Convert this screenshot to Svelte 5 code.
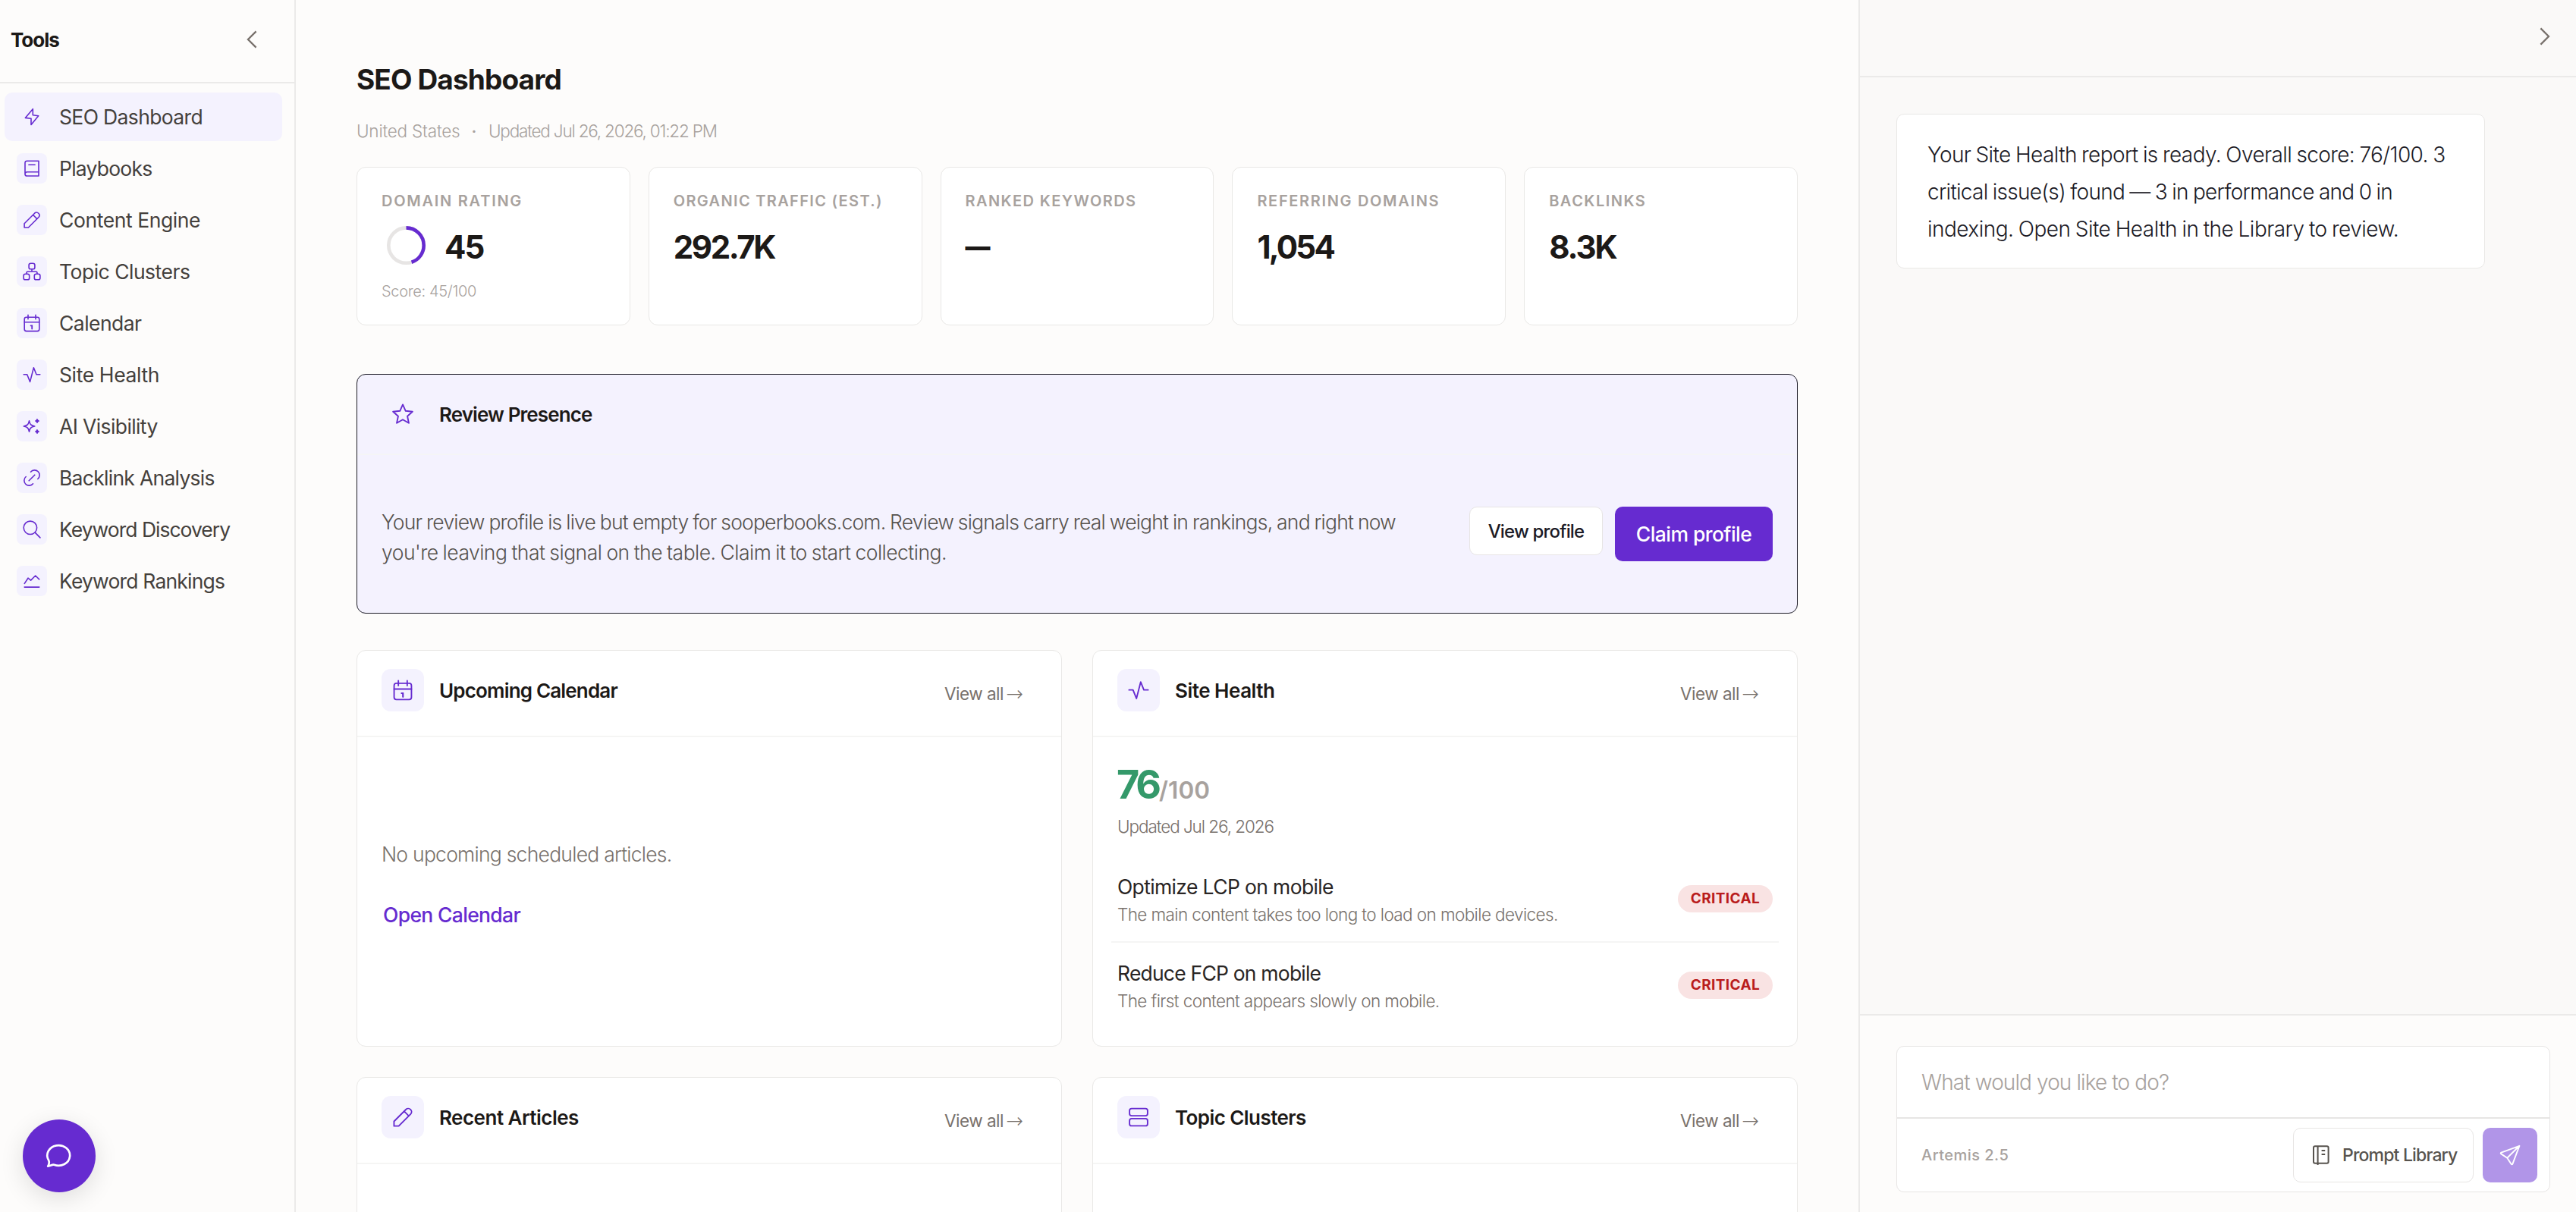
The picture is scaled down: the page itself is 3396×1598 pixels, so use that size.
<script>
  const tools = [
    { label: 'SEO Dashboard', icon: 'bolt', track: -0.64 },
    { label: 'Playbooks', icon: 'book', track: -0.78 },
    { label: 'Content Engine', icon: 'pencil', track: -0.42 },
    { label: 'Topic Clusters', icon: 'tree', track: -0.5 },
    { label: 'Calendar', icon: 'calendar', track: -0.55 },
    { label: 'Site Health', icon: 'pulse', track: -0.38 },
    { label: 'AI Visibility', icon: 'sparkles', track: -0.6 },
    { label: 'Backlink Analysis', icon: 'link', track: -0.72 },
    { label: 'Keyword Discovery', icon: 'search', track: -1 },
    { label: 'Keyword Rankings', icon: 'chart', track: -0.82 }
  ];
  const stats = [
    { label: 'DOMAIN RATING', value: '45', track: 1.75, vtrack: -1.9, score: 45 },
    { label: 'ORGANIC TRAFFIC (EST.)', value: '292.7K', track: 1.33, vtrack: -2.41 },
    { label: 'RANKED KEYWORDS', value: '—', track: 1.4, vtrack: 0, empty: true },
    { label: 'REFERRING DOMAINS', value: '1,054', track: 1.67, vtrack: -2.77 },
    { label: 'BACKLINKS', value: '8.3K', track: 1.5, vtrack: -2.1 }
  ];
  const issues = [
    { title: 'Optimize LCP on mobile', track: -0.64, desc: 'The main content takes too long to load on mobile devices.', level: 'CRITICAL' },
    { title: 'Reduce FCP on mobile', track: -0.79, desc: 'The first content appears slowly on mobile.', level: 'CRITICAL' }
  ];
  const message = [
    { text: 'Your Site Health report is ready. Overall score: 76/100. 3', track: -0.61 },
    { text: 'critical issue(s) found — 3 in performance and 0 in', track: -0.72 },
    { text: 'indexing. Open Site Health in the Library to review.', track: -0.53 }
  ];
</script>

{#snippet icon(name)}
  <svg class="icon" viewBox="0 0 24 24" fill="none" stroke="currentColor" stroke-width="1.6" stroke-linejoin="round" stroke-linecap="round">
    {#if name === 'bolt'}
      <path d="M13.3 1.7V9.8L20.7 10.7 11 22.4V14.3L3.3 13.4Z" />
    {:else if name === 'book'}
      <path d="M21 2.2V22H5.6A2.6 2.6 0 0 1 3 19.4V4.8A2.6 2.6 0 0 1 5.6 2.2ZM3 19.4A2.6 2.6 0 0 1 5.6 16.8H21M7.9 7.3h8.2" />
    {:else if name === 'pencil'}
      <path d="M2.1 22v-5.3L15.6 3.2a3.75 3.75 0 0 1 5.3 5.3L7.4 22ZM13.5 5.3l5.3 5.3" />
    {:else if name === 'tree'}
      <rect x="8.1" y="1.2" width="7.8" height="7.6" rx="2.4" />
      <rect x="1.1" y="15.2" width="7.6" height="7.6" rx="2.4" />
      <rect x="15.3" y="15.2" width="7.6" height="7.6" rx="2.4" />
      <path d="M12 8.8V12M5 15.2V14a2 2 0 0 1 2-2h10a2 2 0 0 1 2 2v1.2" />
    {:else if name === 'calendar'}
      <rect x="2.2" y="4.2" width="19.6" height="18.4" rx="2.6" />
      <path d="M2.2 10.7h19.6M7 1.2v5.6M17 1.2v5.6" />
      <path d="M10.6 15.4h1.6v4.2" stroke-width="1.8" stroke-linejoin="miter" />
    {:else if name === 'pulse'}
      <path d="M1.2 11.7h4.5L9.6 21.4 14.4 2.7 18 11.7h4.8" />
    {:else if name === 'sparkles'}
      <path d="M8.5 4.8C9.4 9.6 10.9 11.1 15.7 12 10.9 12.9 9.4 14.4 8.5 19.2 7.6 14.4 6.1 12.9 1.3 12 6.1 11.1 7.6 9.6 8.5 4.8Z" />
      <path d="M19 3C19.4 4.3 19.7 4.6 21 5 19.7 5.4 19.4 5.7 19 7 18.6 5.7 18.3 5.4 17 5 18.3 4.6 18.6 4.3 19 3ZM19 17C19.4 18.3 19.7 18.6 21 19 19.7 19.4 19.4 19.7 19 21 18.6 19.7 18.3 19.4 17 19 18.3 18.6 18.6 18.3 19 17Z" fill="currentColor" stroke-width="1.8" />
    {:else if name === 'link'}
      <path d="M8.2 15.8l7.6-7.6M10.5 4.2A6.6 6.6 0 1 1 19.8 13.5M13.5 19.8A6.6 6.6 0 1 1 4.2 10.5" />
    {:else if name === 'search'}
      <circle cx="9.9" cy="9.8" r="8.7" />
      <path d="M16.2 16.1l6.7 6.8" />
    {:else if name === 'chart'}
      <path d="M2.3 15.4L7 8.2l3.6 2.9L16.7 5l5 4.8M2.2 20.1h19.6" />
    {:else if name === 'star'}
      <path d="M12 1.2l3.2 7.2 7.8.8-5.8 5.2 1.6 7.7L12 18.2l-6.8 3.9 1.6-7.7L1 9.2l7.8-.8z" />
    {:else if name === 'stack'}
      <rect x="1.8" y="2.2" width="20.4" height="8.2" rx="2.4" />
      <rect x="1.8" y="13.6" width="20.4" height="8.2" rx="2.4" />
    {/if}
  </svg>
{/snippet}

{#snippet cardHead(name, title, track)}
  <header class="card-head">
    <span class="icon-box">{@render icon(name)}</span>
    <h2 style:letter-spacing="{track}px">{title}</h2>
    <span class="view-all">View all<span class="arrow">→</span></span>
  </header>
{/snippet}

<div class="app">
  <aside class="sidebar">
    <div class="side-head">
      <span>Tools</span>
      <svg class="chev" viewBox="0 0 14 24" fill="none" stroke="currentColor" stroke-width="2.3"><path d="M12.6 1.4L2 12l10.6 10.6" /></svg>
    </div>
    <nav>
      {#each tools as t, i}
        <div class="item" class:active={i === 0}>
          <span class="tile">{@render icon(t.icon)}</span>
          <span style:letter-spacing="{t.track}px">{t.label}</span>
        </div>
      {/each}
    </nav>
    <button class="fab" aria-label="Chat">
      <svg viewBox="0 0 36 36" fill="none" stroke="currentColor" stroke-width="2.7" stroke-linejoin="round"><path d="M3.2 31.6c2.2-3.6 2-5.4.9-7.8A14.9 13.4 0 1 1 11.4 29.8c-2.8-.7-4.8 1.6-8.2 1.8z" /></svg>
    </button>
  </aside>

  <main>
    <h1>SEO Dashboard</h1>
    <div class="meta">
      <span class="country">United States</span><span class="dot">·</span><span class="updated">Updated Jul 26, 2026, 01:22 PM</span>
    </div>

    <section class="stats">
      {#each stats as s}
        <div class="card stat">
          <div class="label" style:letter-spacing="{s.track}px">{s.label}</div>
          <div class="figure">
            {#if s.score}
              <svg class="ring" viewBox="0 0 68 56" fill="none" stroke-width="4.6">
                <circle cx="33.5" cy="27.6" r="23.2" stroke="#e7e5e4" />
                <circle cx="33.5" cy="27.6" r="23.2" stroke="#662bd0" pathLength="100" stroke-dasharray="{s.score} 100" transform="rotate(-90 33.5 27.6)" />
              </svg>
            {/if}
            <span class="value" class:empty={s.empty} style:letter-spacing="{s.vtrack}px">{s.value}</span>
          </div>
          {#if s.score}<div class="score">Score: {s.score}/100</div>{/if}
        </div>
      {/each}
    </section>

    <section class="card review">
      <header class="card-head">
        <span class="icon-box">{@render icon('star')}</span>
        <h2 class="review-title">Review Presence</h2>
      </header>
      <div class="review-body">
        <p>
          <span class="l1">Your review profile is live but empty for sooperbooks.com. Review signals carry real weight in rankings, and right now</span>
          <span class="l2">you're leaving that signal on the table. Claim it to start collecting.</span>
        </p>
        <button class="ghost">View profile</button>
        <button class="primary">Claim profile</button>
      </div>
    </section>

    <section class="grid">
      <div class="card panel">
        {@render cardHead('calendar', 'Upcoming Calendar', -0.82)}
        <div class="empty-body">
          <p>No upcoming scheduled articles.</p>
          <span class="open">Open Calendar</span>
        </div>
      </div>
      <div class="card panel">
        {@render cardHead('pulse', 'Site Health', -0.49)}
        <div class="health">
          <div class="total"><b>76</b><span>/100</span></div>
          <div class="when">Updated Jul 26, 2026</div>
          <div class="issues">
            {#each issues as s}
              <div class="issue">
                <div>
                  <div class="issue-title" style:letter-spacing="{s.track}px">{s.title}</div>
                  <div class="issue-desc">{s.desc}</div>
                </div>
                <span class="badge">{s.level}</span>
              </div>
            {/each}
          </div>
        </div>
      </div>
      <div class="card panel">{@render cardHead('pencil', 'Recent Articles', -0.51)}</div>
      <div class="card panel">{@render cardHead('stack', 'Topic Clusters', -0.57)}</div>
    </section>
  </main>

  <aside class="chat">
    <div class="chat-head">
      <svg class="chev" viewBox="0 0 14 24" fill="none" stroke="currentColor" stroke-width="2.3"><path d="M1.4 1.4L12 12 1.4 22.6" /></svg>
    </div>
    <div class="thread">
      <div class="bubble">
        {#each message as m}<div style:letter-spacing="{m.track}px">{m.text}</div>{/each}
      </div>
    </div>
    <div class="composer">
      <div class="box">
        <div class="prompt">What would you like to do?</div>
        <div class="bar">
          <span class="model">Artemis 2.5</span>
          <button class="library">
            <svg viewBox="0 0 24 28" fill="none" stroke="currentColor" stroke-width="2"><rect x="2" y="2.2" width="19.6" height="22.6" rx="2" /><path d="M7.6 2.2V27M12.6 8h4.6M12.6 13h4.6" /></svg>
            <span>Prompt Library</span>
          </button>
          <button class="send" aria-label="Send">
            <svg viewBox="0 0 28 28" fill="none" stroke="currentColor" stroke-width="1.9" stroke-linejoin="round"><path d="M26.4 1.8L2.4 10.6c-.9.4-.9 1.3-.1 1.8l8 5.3 5.3 8c.5.8 1.4.8 1.8-.1zM26.4 1.8L10.3 17.7" /></svg>
          </button>
        </div>
      </div>
    </div>
  </aside>
</div>

<style>
  :global(body) { background: #fdfcfb; }
  * { box-sizing: border-box; }
  h1, h2, p { margin: 0; }
  button { margin: 0; padding: 0; font: inherit; border: 0; flex: none; }
  svg { display: block; flex: none; }
  .app {
    display: flex;
    height: 1598px;
    overflow: hidden;
    background: #fdfcfb;
    color: #1c1917;
    font-family: Inter, "Liberation Sans", sans-serif;
    white-space: nowrap;
  }

  .sidebar { position: relative; flex: none; width: 390px; border-right: 2px solid #ebeae9; }
  .side-head {
    display: flex; align-items: center; justify-content: space-between;
    height: 110px; padding: 0 49px 4px 14px;
    border-bottom: 2px solid #ebeae9;
    font-size: 26px; font-weight: 700; letter-spacing: -1px;
  }
  .chev { width: 14px; height: 24px; color: #78716c; }
  nav { display: flex; flex-direction: column; gap: 4px; padding: 12px 16px 0 6px; }
  .item {
    display: flex; align-items: center; gap: 16px;
    height: 64px; padding-left: 16px; border-radius: 10px;
    font-size: 26.5px; color: #44403c;
  }
  .active, .tile, .icon-box { background: #f4f2fe; }
  .tile, .icon-box { display: flex; align-items: center; justify-content: center; flex: none; color: #662bd0; }
  .tile { width: 40px; height: 40px; border-radius: 8px; }
  .tile .icon { width: 24px; height: 24px; }
  .icon-box { width: 56px; height: 56px; border-radius: 12px; }
  .icon-box .icon { width: 28px; height: 28px; }
  .fab {
    position: absolute; left: 30px; bottom: 26px;
    display: flex; align-items: center; justify-content: center;
    width: 96px; height: 96px; border-radius: 50%;
    background: #662bd0; color: #fff;
    box-shadow: 0 8px 32px rgba(0, 0, 0, 0.12);
  }
  .fab svg { width: 36px; height: 36px; }

  main { flex: 1; min-width: 0; padding: 80px 80px 0; }
  h1 { height: 49px; line-height: 49px; font-size: 37px; font-weight: 700; letter-spacing: -0.87px; }
  .meta { display: flex; height: 30px; margin: 29px 0 32px; line-height: 30px; font-size: 22.5px; font-weight: 300; color: #a8a29e; }
  .country { width: 136px; letter-spacing: -0.2px; }
  .dot { width: 38px; text-align: center; font-weight: 500; }
  .updated { letter-spacing: -1.2px; }

  .card { background: #fff; border: 1px solid #e9e8e6; border-radius: 12px; }
  .stats { display: grid; grid-template-columns: repeat(5, 1fr); gap: 24px; }
  .stat { height: 209px; padding: 29px 31px 0 32px; }
  .label { line-height: 30px; font-size: 20px; font-weight: 600; color: #a8a29e; }
  .figure { display: flex; align-items: center; height: 56px; margin-top: 16px; }
  .ring { width: 68px; height: 56px; margin: 0 16px 0 -1px; }
  .value { padding-top: 3px; line-height: 53px; font-size: 42px; font-weight: 700; }
  .value.empty { font-size: 33px; font-weight: 900; }
  .score { margin-top: 19px; line-height: 26px; font-size: 20px; font-weight: 300; letter-spacing: -0.33px; color: #a8a29e; }

  .card-head { display: flex; height: 114px; padding: 24px 50px 0 32px; border-bottom: 2px solid #f5f5f4; }
  .card-head h2 { margin-left: 20px; line-height: 58px; font-size: 26px; font-weight: 600; }
  .view-all { display: flex; margin-left: auto; line-height: 66px; font-size: 22.5px; letter-spacing: -0.5px; color: #78716c; }
  .arrow { width: 26px; text-align: right; font-family: "DejaVu Sans", sans-serif; font-weight: 200; font-size: 27px; letter-spacing: 0; }

  .review { height: 316px; margin-top: 64px; background: #f4f2fe; border-color: #1c1b26; }
  .review .card-head { height: 106px; border-color: #f5f5f6; }
  .card-head .review-title { letter-spacing: -0.9px; }
  .review-body { display: flex; align-items: flex-start; padding: 68px 32px 0; }
  .review-body p { flex: 1; line-height: 40px; font-size: 26.5px; font-weight: 300; color: #57534e; }
  .review-body p span { display: block; }
  .l1 { letter-spacing: -0.8px; word-spacing: -0.85px; }
  .l2 { letter-spacing: -0.52px; word-spacing: -0.9px; }
  .ghost {
    width: 176px; height: 64px; border: 1px solid #e7e5e4; border-radius: 10px;
    background: #fff; color: #1c1b26; font-size: 24px; font-weight: 500; letter-spacing: -0.82px;
  }
  .primary {
    width: 208px; height: 72px; margin-left: 16px; border-radius: 10px;
    background: #662bd0; color: #fff; font-size: 26.5px; font-weight: 500; letter-spacing: -0.55px;
  }

  .grid { display: grid; grid-template-columns: 1fr 1fr; grid-auto-rows: 523px; gap: 40px; margin-top: 48px; }
  .empty-body { padding: 134px 32px 0; line-height: 40px; font-size: 26.5px; }
  .empty-body p { margin-bottom: 40px; font-weight: 300; letter-spacing: -0.75px; color: #78716c; }
  .open { padding-left: 2px; font-weight: 500; letter-spacing: -0.66px; color: #662bd0; }

  .health { padding: 31px 24px 0; }
  .total { display: flex; align-items: baseline; height: 64px; padding-left: 7px; line-height: 64px; }
  .total b { width: 56px; font-size: 52px; font-weight: 700; letter-spacing: -4.2px; color: #34996a; }
  .total span { font-size: 31.5px; font-weight: 600; letter-spacing: 0.1px; color: #a8a29e; }
  .when { margin: 7px 0 23px; padding-left: 8px; line-height: 32px; font-size: 22.5px; font-weight: 300; letter-spacing: -1.07px; color: #78716c; }
  .issue { display: flex; align-items: center; justify-content: space-between; height: 114px; padding: 0 8px; border-bottom: 2px solid #f5f5f4; }
  .issue:last-child { border-color: transparent; }
  .issue-title { line-height: 40px; font-size: 26.5px; color: #292524; }
  .issue-desc { padding-top: 1px; line-height: 32px; font-size: 22.5px; font-weight: 300; letter-spacing: -0.6px; color: #78716c; }
  .badge {
    width: 125px; height: 36px; border-radius: 18px; text-align: center; line-height: 36px;
    background: #f9e3e3; color: #b91c1c; font-size: 19px; font-weight: 700; letter-spacing: 0.4px;
  }

  .chat { display: flex; flex-direction: column; flex: none; width: 946px; border-left: 2px solid #ebeae9; background: #faf9f8; }
  .chat-head { display: flex; align-items: center; justify-content: flex-end; height: 102px; padding: 0 34px 4px 0; border-bottom: 2px solid #ebeae9; }
  .thread { flex: 1; padding: 48px; }
  .bubble {
    width: 776px; height: 204px; padding: 29px 40px 0; border: 1px solid #e9e8e6; border-radius: 10px;
    background: #fff; color: #1c1b26; line-height: 49px; font-size: 28px; font-weight: 300; word-spacing: -0.95px;
  }
  .composer { height: 261px; padding: 40px 34px 0 48px; border-top: 2px solid #ebeae9; background: #fdfcfb; }
  .box { height: 193px; border: 1px solid #e7e5e4; border-radius: 10px; background: #fff; }
  .prompt { height: 95px; padding-left: 32px; border-bottom: 2px solid #e7e5e4; line-height: 94px; font-size: 28px; font-weight: 300; letter-spacing: -0.89px; color: #a8a29e; }
  .bar { display: flex; align-items: center; height: 96px; padding: 0 16px 0 32px; }
  .model { margin-right: auto; font-size: 20px; font-weight: 500; letter-spacing: 0.47px; color: #a8a29e; }
  .library {
    display: flex; align-items: center; width: 238px; height: 72px; padding-left: 24px;
    border: 1px solid #e7e5e4; border-radius: 10px; background: #fff;
    color: #57534e; font-size: 23px; font-weight: 500; letter-spacing: -0.83px;
  }
  .library svg { width: 24px; height: 28px; margin-right: 16px; }
  .send {
    display: flex; align-items: center; justify-content: center;
    width: 72px; height: 72px; margin-left: 12px; border-radius: 10px; background: #b195e8; color: #fff;
  }
  .send svg { width: 28px; height: 28px; }
</style>
